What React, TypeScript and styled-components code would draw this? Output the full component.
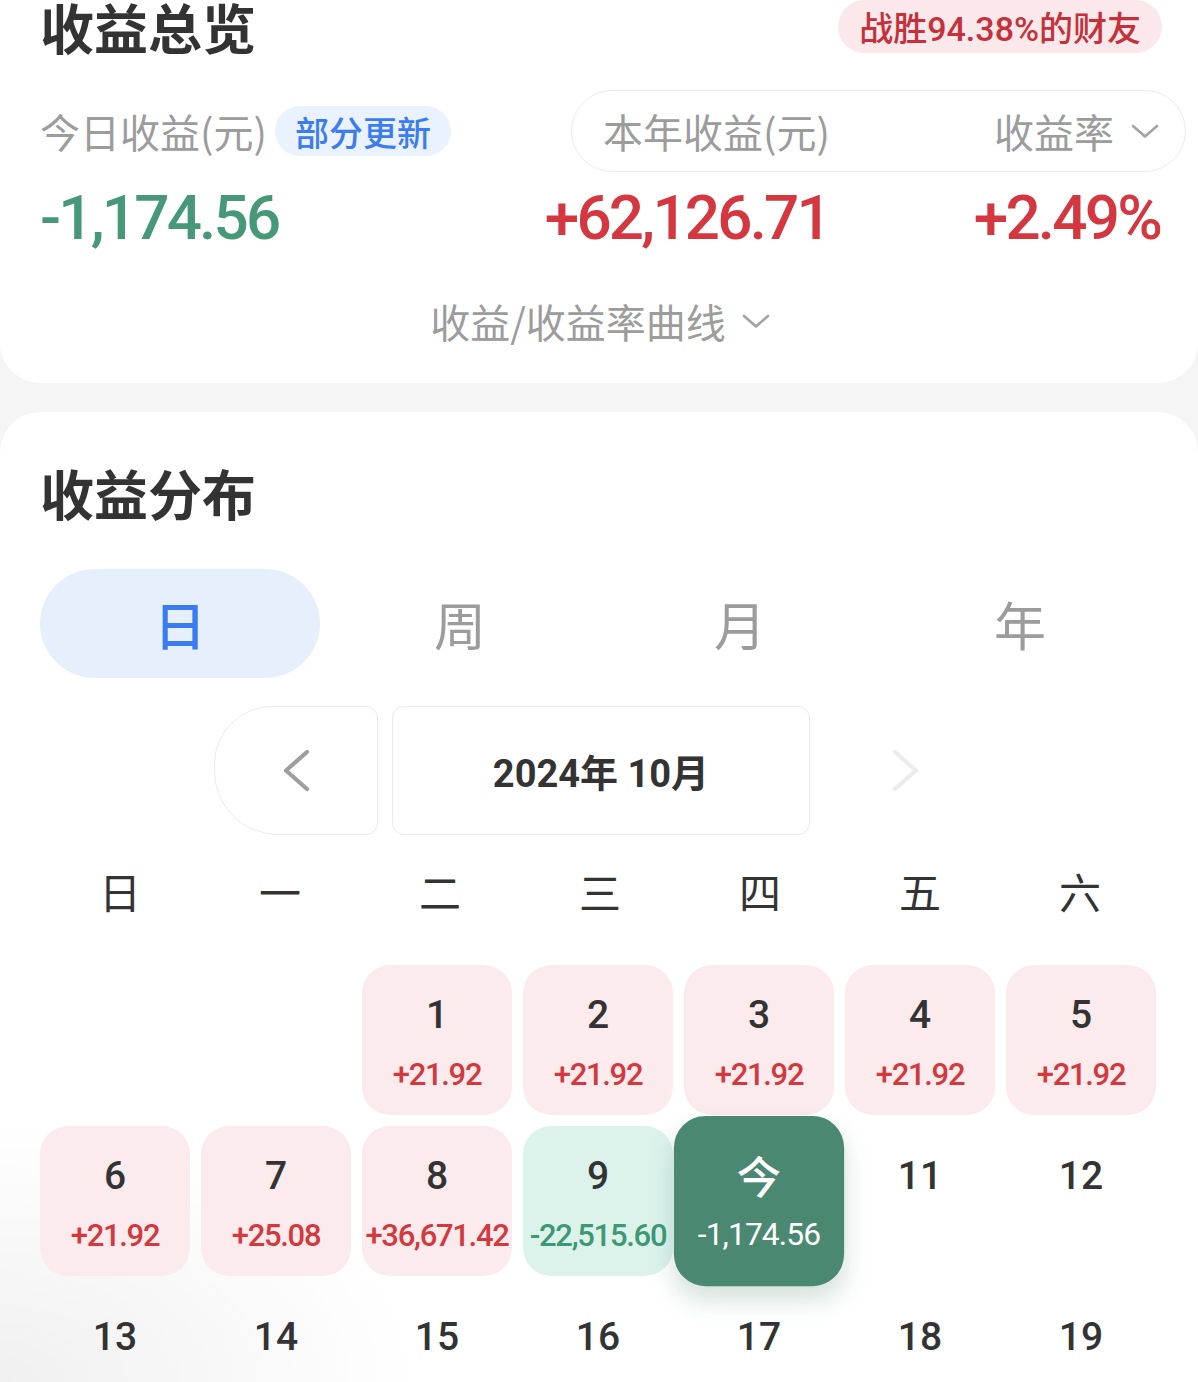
import React from "react";
import styled, { createGlobalStyle } from "styled-components";

type Tone = "up" | "down" | "today" | "none";

type Day = {
  day: number;
  value?: string;
  tone: Tone;
};

const CJK = `"Noto Sans CJK SC", "Noto Sans", sans-serif`;
const NUM = `Roboto, "Noto Sans CJK SC", sans-serif`;

const days: Day[] = [
  { day: 1, value: "+21.92", tone: "up" },
  { day: 2, value: "+21.92", tone: "up" },
  { day: 3, value: "+21.92", tone: "up" },
  { day: 4, value: "+21.92", tone: "up" },
  { day: 5, value: "+21.92", tone: "up" },
  { day: 6, value: "+21.92", tone: "up" },
  { day: 7, value: "+25.08", tone: "up" },
  { day: 8, value: "+36,671.42", tone: "up" },
  { day: 9, value: "-22,515.60", tone: "down" },
  { day: 10, value: "-1,174.56", tone: "today" },
];

const weekdays = ["日", "一", "二", "三", "四", "五", "六"];
const tabs = ["日", "周", "月", "年"];

function ChevronDown() {
  return (
    <svg width="28" height="15" viewBox="0 0 28 15">
      <polyline
        points="2,2 14,12.5 26,2"
        fill="none"
        stroke="#a3a3a3"
        strokeWidth="2.6"
        strokeLinecap="round"
        strokeLinejoin="round"
      />
    </svg>
  );
}

function Chevron({ dir, color }: { dir: "left" | "right"; color: string }) {
  const pts = dir === "left" ? "25,3 4,21.5 25,40" : "3,3 24,21.5 3,40";
  return (
    <svg width="28" height="43" viewBox="0 0 28 43">
      <polyline
        points={pts}
        fill="none"
        stroke={color}
        strokeWidth="4.2"
        strokeLinecap="round"
        strokeLinejoin="round"
      />
    </svg>
  );
}

function App() {
  // 10月1日是周二，前面空两格
  const cells: (Day | null)[] = [null, null];
  for (let d = 1; d <= 31; d++) {
    const found = days.find((x) => x.day === d);
    cells.push(found ?? { day: d, tone: "none" });
  }

  return (
    <Page>
      <GlobalStyle />
      <OverviewCard>
        <HeaderRow>
          <Title>收益总览</Title>
          <RankBadge>战胜94.38%的财友</RankBadge>
        </HeaderRow>

        <LabelRow>
          <LabelGroup>
            <Label>今日收益(元)</Label>
            <UpdateTag>部分更新</UpdateTag>
          </LabelGroup>
          <YearPill>
            <Label>本年收益(元)</Label>
            <RateSelect>
              <Label>收益率</Label>
              <ChevronDown />
            </RateSelect>
          </YearPill>
        </LabelRow>

        <ValueRow>
          <BigValue tone="down">-1,174.56</BigValue>
          <BigValue tone="up" $right>
            +62,126.71
          </BigValue>
          <BigValue tone="up" $right>
            +2.49%
          </BigValue>
        </ValueRow>

        <CurveToggle>
          <span>收益/收益率曲线</span>
          <ChevronDown />
        </CurveToggle>
      </OverviewCard>

      <DistributionCard>
        <Title>收益分布</Title>

        <TabBar>
          {tabs.map((t, i) => (
            <Tab key={t} $active={i === 0}>
              {t}
            </Tab>
          ))}
        </TabBar>

        <MonthNav>
          <NavButton $side="left">
            <Chevron dir="left" color="#9e9e9e" />
          </NavButton>
          <MonthLabel>2024年 10月</MonthLabel>
          <NavButton $side="right" $disabled>
            <Chevron dir="right" color="#ececec" />
          </NavButton>
        </MonthNav>

        <WeekHeader>
          {weekdays.map((w) => (
            <WeekDay key={w}>{w}</WeekDay>
          ))}
        </WeekHeader>

        <DayGrid>
          {cells.map((c, idx) =>
            c === null ? (
              <DayCell key={"e" + idx} tone="none" />
            ) : (
              <DayCell key={c.day} tone={c.tone}>
                <DayNum tone={c.tone}>{c.tone === "today" ? "今" : c.day}</DayNum>
                {c.value && <DayValue tone={c.tone}>{c.value}</DayValue>}
              </DayCell>
            )
          )}
        </DayGrid>
      </DistributionCard>
    </Page>
  );
}

export default App;

const GlobalStyle = createGlobalStyle`
  html, body {
    margin: 0;
    padding: 0;
    background: #f5f5f5;
  }
  * {
    box-sizing: border-box;
  }
`;

const Page = styled.div`
  width: 1198px;
  height: 100vh;
  overflow: hidden;
  background: #f5f5f5;
  font-family: ${CJK};
  color: #333333;
`;

const OverviewCard = styled.section`
  background: #ffffff;
  border-radius: 0 0 40px 40px;
  padding: 0 38px 38px 40px;
`;

const HeaderRow = styled.div`
  display: flex;
  justify-content: space-between;
  align-items: center;
  height: 53px;
`;

const Title = styled.h1`
  margin: 0;
  font-family: ${CJK};
  font-size: 54px;
  line-height: 56px;
  font-weight: 700;
  color: #333333;
`;

const RankBadge = styled.div`
  height: 53px;
  margin-right: -2px;
  padding: 0 21px;
  display: flex;
  align-items: center;
  border-radius: 27px;
  background: #fbe8ea;
  color: #c5303a;
  font-family: ${NUM};
  font-size: 34px;
  font-weight: 500;
`;

const LabelRow = styled.div`
  display: grid;
  grid-template-columns: 531px 1fr;
  align-items: center;
  margin-top: 37px;
`;

const LabelGroup = styled.div`
  display: flex;
  align-items: center;
  gap: 8px;
`;

const Label = styled.span`
  font-family: ${CJK};
  font-size: 40px;
  line-height: 48px;
  color: #9c9c9c;
  white-space: nowrap;
`;

const UpdateTag = styled.span`
  height: 50px;
  padding: 0 20px;
  display: inline-flex;
  align-items: center;
  border-radius: 25px;
  background: #e9f2fe;
  color: #3b7cf0;
  font-size: 34px;
  font-weight: 500;
`;

const YearPill = styled.div`
  height: 82px;
  margin-right: -26px;
  padding-right: 26px;
  display: grid;
  grid-template-columns: 258px 1fr;
  align-items: center;
  justify-items: end;
  border: 1.5px solid #ebebeb;
  border-radius: 41px;
`;

const RateSelect = styled.div`
  display: flex;
  align-items: center;
  gap: 17px;
`;

const ValueRow = styled.div`
  display: grid;
  grid-template-columns: 480px 309px 1fr;
  margin-top: 11px;
`;

const BigValue = styled.div<{ tone: "up" | "down"; $right?: boolean }>`
  font-family: ${NUM};
  font-size: 62px;
  line-height: 70px;
  font-weight: 500;
  letter-spacing: -2.8px;
  white-space: nowrap;
  text-align: ${(p) => (p.$right ? "right" : "left")};
  color: ${(p) => (p.tone === "up" ? "#d4373f" : "#479878")};
`;

const CurveToggle = styled.div`
  margin-top: 44px;
  display: flex;
  justify-content: center;
  align-items: center;
  gap: 16px;
  font-size: 40px;
  line-height: 48px;
  color: #9c9c9c;
`;

const DistributionCard = styled.section`
  margin-top: 29px;
  min-height: 1200px;
  border-radius: 40px 40px 0 0;
  padding: 53px 38px 40px 40px;
  background:
    radial-gradient(420px 260px at 0 970px, rgba(0, 0, 0, 0.06), rgba(0, 0, 0, 0)),
    #ffffff;
`;

const TabBar = styled.div`
  display: grid;
  grid-template-columns: repeat(4, 280px);
  margin-top: 48px;
`;

const Tab = styled.div<{ $active?: boolean }>`
  height: 109px;
  display: flex;
  align-items: center;
  justify-content: center;
  border-radius: 55px;
  font-size: 52px;
  font-weight: ${(p) => (p.$active ? 500 : 400)};
  color: ${(p) => (p.$active ? "#3a7bf0" : "#9c9c9c")};
  background: ${(p) => (p.$active ? "#e6effc" : "transparent")};
`;

const MonthNav = styled.div`
  display: flex;
  justify-content: center;
  gap: 14px;
  margin: 28px -38px 0 -40px;
  padding-left: 4px;
`;

const NavButton = styled.div<{ $side: "left" | "right"; $disabled?: boolean }>`
  width: 164px;
  height: 129px;
  display: flex;
  align-items: center;
  justify-content: center;
  border: 1.5px solid ${(p) => (p.$disabled ? "transparent" : "#ebebeb")};
  border-radius: ${(p) =>
    p.$side === "left" ? "58px 12px 12px 64px" : "12px 58px 64px 12px"};
`;

const MonthLabel = styled.div`
  width: 418px;
  height: 129px;
  display: flex;
  align-items: center;
  justify-content: center;
  border: 1.5px solid #ebebeb;
  border-radius: 12px;
  font-family: ${NUM};
  font-size: 38px;
  font-weight: 700;
  color: #333333;
`;

const WeekHeader = styled.div`
  display: grid;
  grid-template-columns: repeat(7, 160px);
  margin-top: 32px;
`;

const WeekDay = styled.div`
  text-align: center;
  font-size: 42px;
  line-height: 48px;
  color: #333333;
`;

const DayGrid = styled.div`
  display: grid;
  grid-template-columns: repeat(7, 150px);
  grid-auto-rows: 150px;
  gap: 11px;
  margin-top: 50px;
`;

const cellBg: Record<Tone, string> = {
  up: "#fbebec",
  down: "#dcf3ec",
  today: "#4b8872",
  none: "transparent",
};

const DayCell = styled.div<{ tone: Tone }>`
  position: relative;
  display: flex;
  flex-direction: column;
  align-items: center;
  padding-top: 27px;
  gap: 19px;
  border-radius: 28px;
  background: ${(p) => cellBg[p.tone]};
  ${(p) =>
    p.tone === "today" &&
    `
    z-index: 1;
    padding-top: 33px;
    gap: 8px;
    transform: scale(1.135);
    box-shadow: 0 12px 22px rgba(60, 120, 98, 0.22);
  `}
`;

const DayNum = styled.div<{ tone: Tone }>`
  font-family: ${NUM};
  font-size: 39px;
  line-height: 46px;
  font-weight: 500;
  color: ${(p) => (p.tone === "today" ? "#ffffff" : "#333333")};
`;

const DayValue = styled.div<{ tone: Tone }>`
  font-family: ${NUM};
  font-size: 31px;
  line-height: 36px;
  font-weight: 500;
  letter-spacing: -1.3px;
  white-space: nowrap;
  color: ${(p) =>
    p.tone === "today" ? "#ffffff" : p.tone === "down" ? "#3f9874" : "#d3383f"};
  ${(p) => p.tone === "today" && "font-size: 28px; font-weight: 400; letter-spacing: -0.8px;"}
`;
